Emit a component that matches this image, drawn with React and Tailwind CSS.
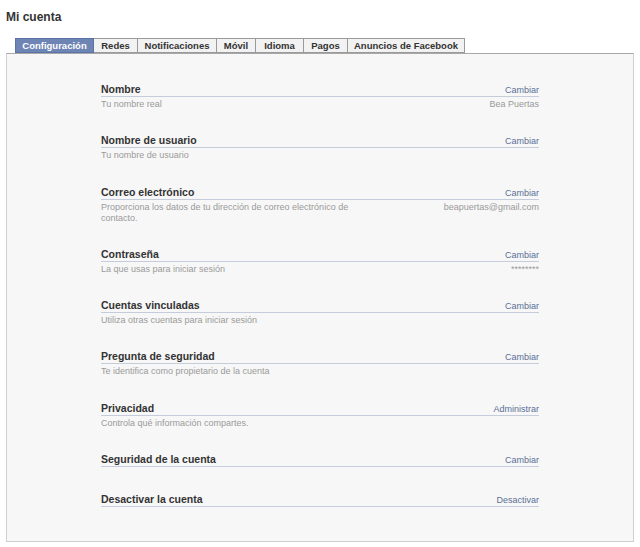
import React from 'react'

const tabs = [
    { label: 'Configuración', w: 'w-[79px]', active: true },
    { label: 'Redes', w: 'w-[44px]' },
    { label: 'Notificaciones', w: 'w-[79px]' },
    { label: 'Móvil', w: 'w-[39px]' },
    { label: 'Idioma', w: 'w-[48px]' },
    { label: 'Pagos', w: 'w-[44px]' },
    { label: 'Anuncios de Facebook', w: 'w-[117px]' },
]

const rows = [
    { title: 'Nombre', action: 'Cambiar', desc: 'Tu nombre real', value: 'Bea Puertas' },
    { title: 'Nombre de usuario', action: 'Cambiar', desc: 'Tu nombre de usuario' },
    { title: 'Correo electrónico', action: 'Cambiar', desc: 'Proporciona los datos de tu dirección de correo electrónico de contacto.', value: 'beapuertas@gmail.com' },
    { title: 'Contraseña', action: 'Cambiar', desc: 'La que usas para iniciar sesión', value: '********' },
    { title: 'Cuentas vinculadas', action: 'Cambiar', desc: 'Utiliza otras cuentas para iniciar sesión' },
    { title: 'Pregunta de seguridad', action: 'Cambiar', desc: 'Te identifica como propietario de la cuenta' },
    { title: 'Privacidad', action: 'Administrar', desc: 'Controla qué información compartes.' },
    { title: 'Seguridad de la cuenta', action: 'Cambiar' },
    { title: 'Desactivar la cuenta', action: 'Desactivar', last: true },
]

function Row({ title, action, desc, value, last }) {
    return (
        <div className={last ? '' : desc ? 'mb-[24.3px]' : 'mb-[26px]'}>
            <div className="flex items-end justify-between border-b border-[#c5cddc] h-[14px]">
                <span className="text-[10.5px] leading-[13px] font-bold text-[#333]">{title}</span>
                <span className="text-[9px] leading-[12px] text-[#5b6f96]">{action}</span>
            </div>
            {desc && (
                <div className="flex justify-between mt-[2px] text-[9px] leading-[11px] text-[#9a9a9a]">
                    <span className="w-[255px]">{desc}</span>
                    {value && <span>{value}</span>}
                </div>
            )}
        </div>
    )
}

export default function App() {
    return (
        <div className="w-[640px] h-[547px] bg-white font-['Liberation_Sans',Arial,sans-serif]">
            <div className="pl-[6px] pt-[10px] h-[38px]">
                <h1 className="text-[12px] leading-[14px] font-bold text-[#333]">Mi cuenta</h1>
            </div>

            <div className="flex pl-[15px] h-[15px]">
                {tabs.map((t) => (
                    <div
                        key={t.label}
                        className={
                            t.active
                                ? `${t.w} h-[15px] pt-px flex items-center justify-center bg-[#6d84b4] border border-[#5b74a8] text-white text-[9.5px] font-bold`
                                : `${t.w} h-[15px] pt-px flex items-center justify-center bg-[#f2f2f2] border border-l-0 border-[#9a9a9a] text-[#333] text-[9.5px] font-bold`
                        }
                    >
                        {t.label}
                    </div>
                ))}
            </div>

            <div className="ml-[6px] w-[628px] h-[489px] bg-[#f7f7f7] border border-[#cfcfcf] border-t-[#a8a8a8] pt-[29px] px-[94px]">
                {rows.map((r) => (
                    <Row key={r.title} {...r} />
                ))}
            </div>
        </div>
    )
}
